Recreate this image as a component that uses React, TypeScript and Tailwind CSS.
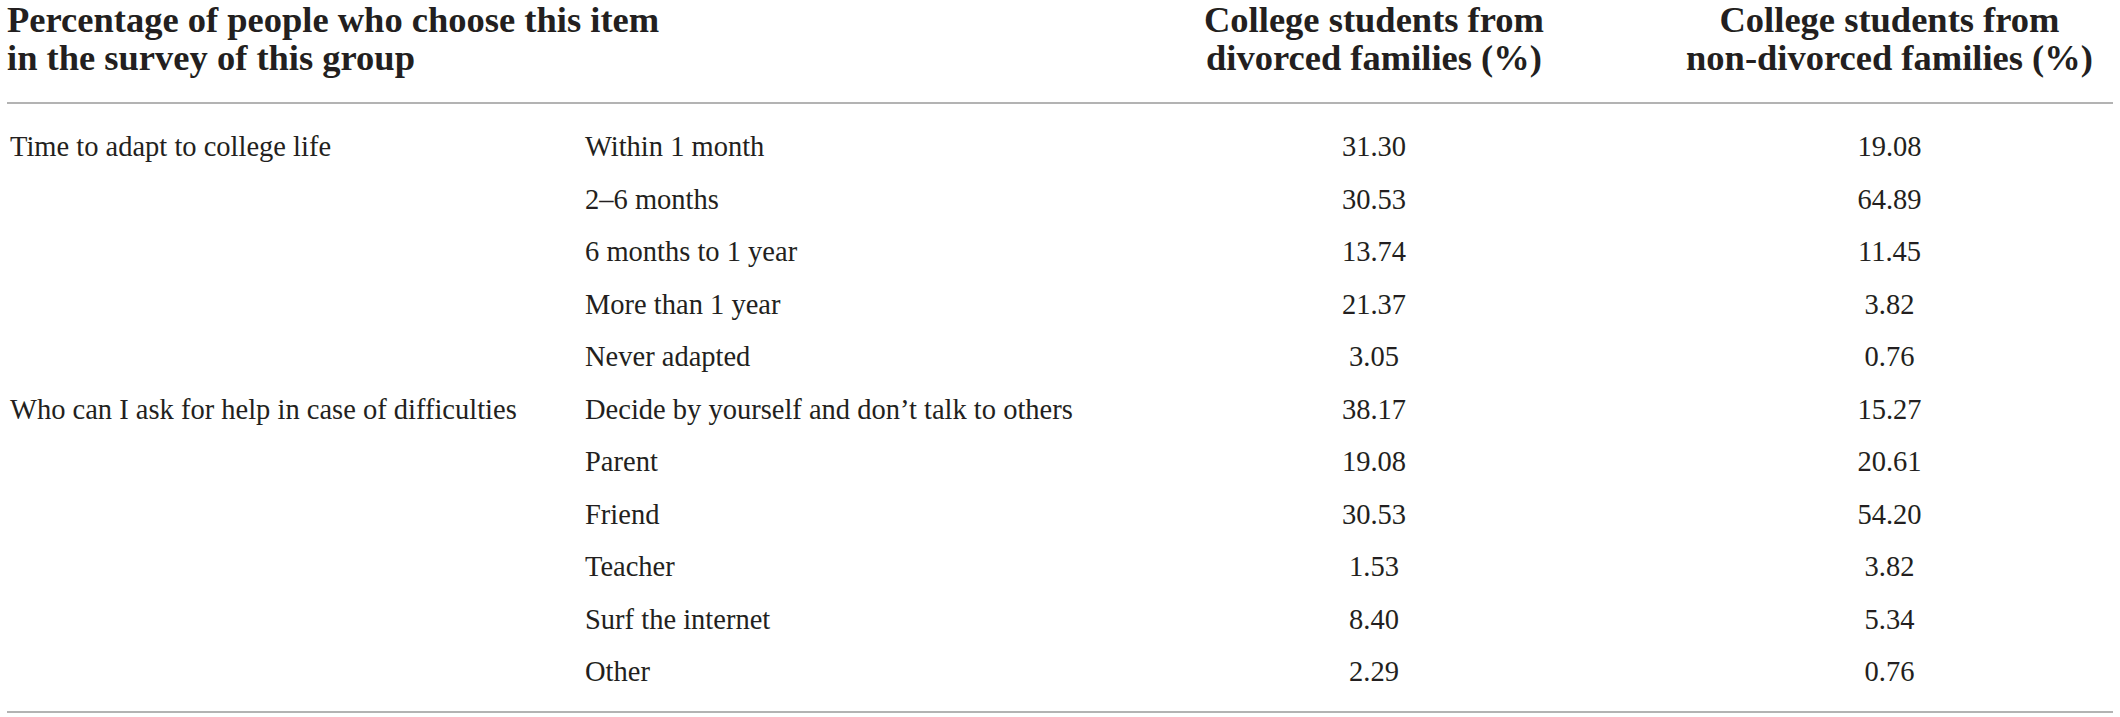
import React from "react";

const rows = [
  { group: "Time to adapt to college life", item: "Within 1 month", a: "31.30", b: "19.08" },
  { group: "", item: "2–6 months", a: "30.53", b: "64.89" },
  { group: "", item: "6 months to 1 year", a: "13.74", b: "11.45" },
  { group: "", item: "More than 1 year", a: "21.37", b: "3.82" },
  { group: "", item: "Never adapted", a: "3.05", b: "0.76" },
  {
    group: "Who can I ask for help in case of difficulties",
    item: "Decide by yourself and don’t talk to others",
    a: "38.17",
    b: "15.27",
  },
  { group: "", item: "Parent", a: "19.08", b: "20.61" },
  { group: "", item: "Friend", a: "30.53", b: "54.20" },
  { group: "", item: "Teacher", a: "1.53", b: "3.82" },
  { group: "", item: "Surf the internet", a: "8.40", b: "5.34" },
  { group: "", item: "Other", a: "2.29", b: "0.76" },
];

const App = () => {
  return (
    <div className="w-[2120px] h-[717px] bg-white px-[7px] text-[#231f20] font-['Liberation_Serif','Times_New_Roman',serif]">
      {/* header */}
      <div className="grid grid-cols-[1133px_468px_1fr] pt-[1px] pb-[25px] border-b-2 border-[#b3b3b3] text-[36.5px] leading-[38px] font-bold">
        <div>
          Percentage of people who choose this item
          <br />
          in the survey of this group
        </div>
        <div className="text-center">
          College students from
          <br />
          divorced families (%)
        </div>
        <div className="text-center pl-[58px]">
          College students from
          <br />
          non-divorced families (%)
        </div>
      </div>

      {/* body */}
      <div className="pt-[17px] pb-[12px] border-b-2 border-[#b3b3b3] text-[28.5px] leading-[52.5px]">
        {rows.map((r, i) => (
          <div key={i} className="grid grid-cols-[578px_555px_468px_1fr]">
            <div className="pl-[3px] whitespace-nowrap">{r.group}</div>
            <div className="whitespace-nowrap">{r.item}</div>
            <div className="text-center">{r.a}</div>
            <div className="text-center pl-[58px]">{r.b}</div>
          </div>
        ))}
      </div>
    </div>
  );
};

export default App;
